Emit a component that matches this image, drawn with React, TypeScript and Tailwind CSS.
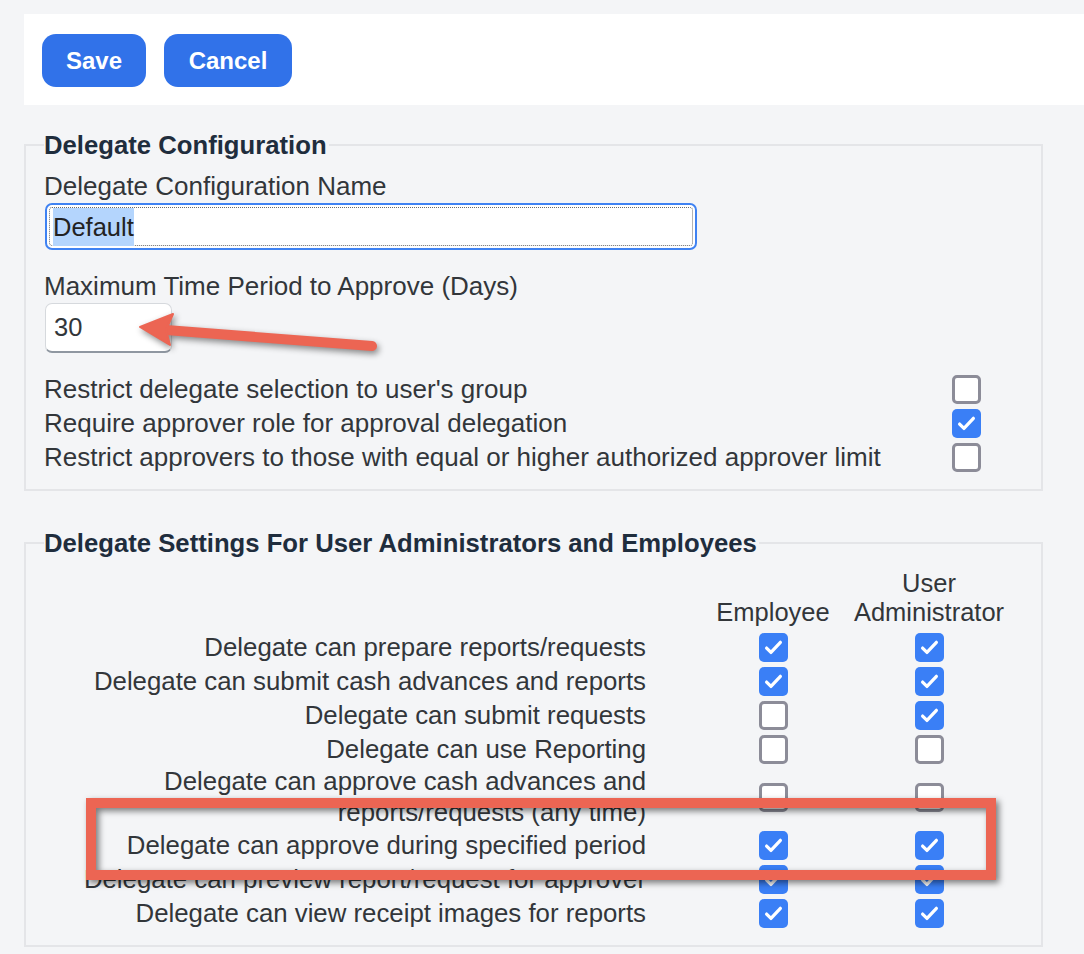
import React from 'react'

const FONT = { fontFamily: '"Liberation Sans", Arial, sans-serif' }

type BoxProps = { checked?: boolean }

function Checkbox({ checked }: BoxProps) {
    if (checked) {
        return (
            <div className="w-[29px] h-[29px] rounded-[5px] bg-[#3a7ff6] flex items-center justify-center">
                <svg width="23" height="23" viewBox="0 0 20 20" fill="none">
                    <path d="M4 10.5l3.8 3.8L16 5.5" stroke="#fff" strokeWidth="2.8" strokeLinecap="round" strokeLinejoin="round" />
                </svg>
            </div>
        )
    }
    return <div className="w-[29px] h-[29px] rounded-[5px] border-[3px] border-[#8c8c98] bg-white" />
}

const generalOptions = [
    { label: "Restrict delegate selection to user's group", checked: false },
    { label: 'Require approver role for approval delegation', checked: true },
    { label: 'Restrict approvers to those with equal or higher authorized approver limit', checked: false },
]

const delegateRows: { label: React.ReactNode; employee: boolean; admin: boolean; tall?: boolean }[] = [
    { label: 'Delegate can prepare reports/requests', employee: true, admin: true },
    { label: 'Delegate can submit cash advances and reports', employee: true, admin: true },
    { label: 'Delegate can submit requests', employee: false, admin: true },
    { label: 'Delegate can use Reporting', employee: false, admin: false },
    {
        label: (
            <>
                Delegate can approve cash advances and
                <br />
                reports/requests (any time)
            </>
        ),
        employee: false,
        admin: false,
        tall: true,
    },
    { label: 'Delegate can approve during specified period', employee: true, admin: true },
    { label: 'Delegate can preview report/request for approver', employee: true, admin: true },
    { label: 'Delegate can view receipt images for reports', employee: true, admin: true },
]

export default function App() {
    return (
        <div className="relative min-h-screen bg-[#f4f5f7] pt-[14px] text-[#32363a]" style={FONT}>
            {/* Toolbar */}
            <div className="ml-[24px] h-[91px] bg-white pt-[20px] pl-[18px] flex gap-[18px]">
                <button className="h-[53px] w-[104px] rounded-[14px] bg-[#3172e9] text-white text-[24px] font-bold">
                    Save
                </button>
                <button className="h-[53px] w-[128px] rounded-[14px] bg-[#3172e9] text-white text-[24px] font-bold">
                    Cancel
                </button>
            </div>

            {/* Delegate Configuration */}
            <fieldset className="mt-[25px] ml-[24px] w-[1019px] border-2 border-[#e4e5e8] pl-[18px] pt-[11px] pb-[15px]">
                <legend className="text-[25.7px] leading-[30px] font-bold text-[#1f2d3d] pr-[2px]">
                    Delegate Configuration
                </legend>
                <div className="text-[26px] leading-[30px]">Delegate Configuration Name</div>
                <div className="mt-[2px] ml-[1px] w-[652px] h-[47px] rounded-[7px] border-2 border-[#3f82f2] bg-white p-[2px]">
                    <div className="h-full border border-dotted border-[#6b6b6b] rounded-[3px] flex items-center pl-[3px]">
                        <span className="bg-[#b4d5fd] text-[25.5px] leading-[38px] text-[#222]">Default</span>
                    </div>
                </div>
                <div className="mt-[21px] text-[26px] leading-[30px]">Maximum Time Period to Approve (Days)</div>
                <div className="mt-[2px] ml-[1px] w-[127px] h-[50px] rounded-[7px] border border-[#d6d9dd] border-b-2 border-b-[#8f97a1] bg-white flex items-center pl-[8px] text-[25.5px]">
                    30
                </div>
                <div className="mt-[19px] w-[937px]">
                    {generalOptions.map((opt) => (
                        <div key={opt.label} className="h-[34px] flex items-center justify-between text-[26px]">
                            <span>{opt.label}</span>
                            <Checkbox checked={opt.checked} />
                        </div>
                    ))}
                </div>
            </fieldset>

            {/* Delegate Settings */}
            <fieldset className="mt-[37px] ml-[24px] w-[1019px] border-2 border-[#e4e5e8] pl-[18px] pt-[11px] pb-[15px]">
                <legend className="text-[25.7px] leading-[30px] font-bold text-[#1f2d3d] pr-[2px]">
                    Delegate Settings For User Administrators and Employees
                </legend>
                <div className="grid grid-cols-[653px_152px_160px] text-[25.8px]">
                    <div />
                    <div className="flex flex-col justify-end items-center leading-[29px] pb-[3px] text-[25.5px]">Employee</div>
                    <div className="flex flex-col justify-end items-center leading-[29px] pb-[3px] text-[25.5px]">
                        <span>User</span>
                        <span>Administrator</span>
                    </div>
                    {delegateRows.map((row, i) => (
                        <React.Fragment key={i}>
                            <div
                                className={
                                    row.tall
                                        ? 'pr-[51px] text-right leading-[31px] h-[62px] flex flex-col justify-center'
                                        : 'pr-[51px] text-right leading-[34px] h-[34px] whitespace-nowrap'
                                }
                            >
                                {row.label}
                            </div>
                            <div className="flex items-center justify-center">
                                <Checkbox checked={row.employee} />
                            </div>
                            <div className="flex items-center justify-center">
                                <Checkbox checked={row.admin} />
                            </div>
                        </React.Fragment>
                    ))}
                </div>
            </fieldset>

            {/* Annotation: arrow pointing at the days field */}
            <svg
                className="absolute left-[130px] top-[300px] drop-shadow-[2px_3px_3px_rgba(0,0,0,0.45)]"
                width="260"
                height="60"
                viewBox="0 0 260 60"
            >
                <path d="M36 30 L242 46" stroke="#ec6553" strokeWidth="10" strokeLinecap="round" />
                <path d="M10 27 L43 14 L36 30 L40 45 Z" fill="#ec6553" stroke="#ec6553" strokeWidth="2" strokeLinejoin="round" />
            </svg>

            {/* Annotation: highlight box */}
            <div className="absolute left-[86px] top-[798px] w-[910px] h-[82px] border-[10px] border-[#ec6553] drop-shadow-[3px_3px_3px_rgba(0,0,0,0.5)]" />
        </div>
    )
}
